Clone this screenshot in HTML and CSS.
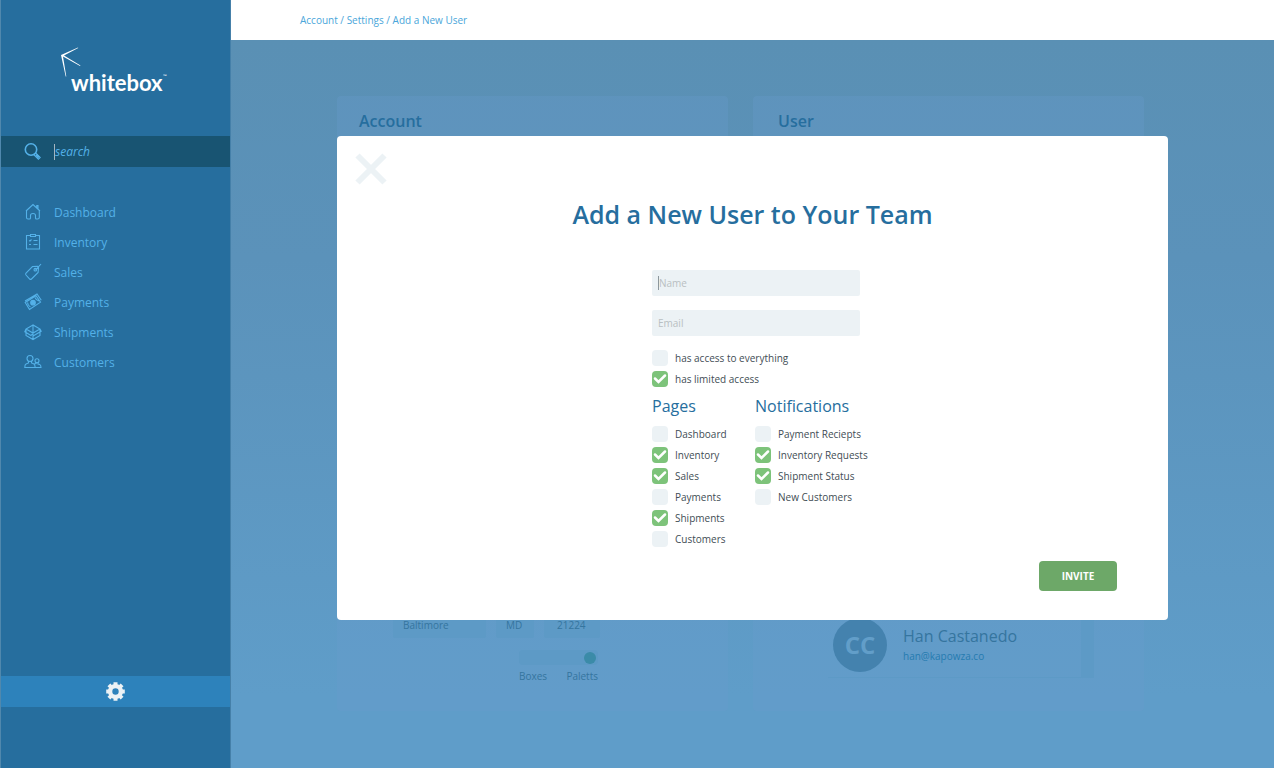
FILE: index.html
```html
<!DOCTYPE html>
<html lang="en">
<head>
<meta charset="utf-8">
<meta name="viewport" content="width=device-width, initial-scale=1">
<title>Whitebox - Add a New User</title>
<link rel="stylesheet" href="styles.css">
</head>
<body>
<div class="app">
  <aside class="sidebar">
    <a class="logo" href="#" aria-label="whitebox">
      <svg width="108" height="50" viewBox="0 0 108 50" aria-hidden="true">
        <g fill="#fff">
          <path d="M0 8 17 .5 17.200 1 3 8.500 19.500 18.500 19 19 2 9.500 5.300 29.500 4.700 29.500Z"/>
        </g>
        <text class="logo-word" x="10" y="44">whitebox</text>
        <text class="logo-mark" x="102" y="31">™</text>
      </svg>
    </a>
    <label class="search">
      <svg class="icon" viewBox="0 0 18 18" aria-hidden="true">
        <circle cx="7" cy="6.500" r="5.700" stroke-width="1.600"/>
        <path d="m11 10.700 1-.5 4.200 4.200-1.800 1.900-4.200-4.200z"/>
        <path d="m12 11.700 2.800 2.900" stroke-width="2.400"/>
      </svg>
      <span class="caret"></span>
      <input class="search-input" type="search" placeholder="search" aria-label="Search">
    </label>
    <nav class="nav">
      <a class="nav-link" href="#">
        <svg class="icon" viewBox="0 0 18 18" aria-hidden="true"><path d="M2.500 7.500v7q0 1.500 1.500 1.500h1.500q1 0 1-1v-2.500q0-2 2.500-2t2.500 2V15q0 1 1 1h1q1.800 0 1.800-1.500v-7M2 8l7-6.500L16 8M12.800 4.500V2.500h1.200v3.500"/></svg>
        Dashboard
      </a>
      <a class="nav-link" href="#">
        <svg class="icon" viewBox="0 0 18 18" aria-hidden="true"><path d="M6.500 2.500h-4v13.500h13v-13.500h-4M6.500 1.500h5v2h-5zM5 7.500l1 .6L7.500 6.500M9.500 7.500h4M5 11.500h2M9.500 11.500h4"/></svg>
        Inventory
      </a>
      <a class="nav-link" href="#">
        <svg class="icon" viewBox="0 0 18 18" aria-hidden="true"><path d="M8.500 3.500 13.500 3.200l1 1.300-.4 5-6.800 6.700q-.8.500-1.600-.2L2 12q-.8-1 0-1.900zM11.500 7.200 17 1"/><circle cx="11.300" cy="6.700" r="1.300"/></svg>
        Sales
      </a>
      <a class="nav-link" href="#">
        <svg class="icon" viewBox="0 0 18 18" aria-hidden="true"><path d="M1.200 9.500 12 2.700l4.500 6.500L5.500 16.500zM1 8l12-7 4.300 6.300M3.500 9.600q0 2.500 3 4.500M11 4.500q1 2.600 4 3.500"/><circle class="solid" cx="9" cy="9.700" r="2.300"/></svg>
        Payments
      </a>
      <a class="nav-link" href="#">
        <svg class="icon" viewBox="0 0 18 18" aria-hidden="true"><path d="M9 2 2 6v6.500l7 4 7-4V6zM9 2v14.500M2 6l7 4 7-4M2 6 .8 8.800 7 12.500 9 10M16 6l1.200 2.300L9 13"/></svg>
        Shipments
      </a>
      <a class="nav-link" href="#">
        <svg class="icon" viewBox="0 0 18 18" aria-hidden="true"><circle cx="6" cy="5.500" r="3"/><path d="M4.500 8v2l-2.500 1Q.8 11.500.8 14.500H17q0-2.500-1.300-3L14 11v-1.500M7.500 8v2l2.500 1q1 .7 1.200 3.500M10 11l2-.5v-1"/><circle cx="13" cy="7.700" r="2"/></svg>
        Customers
      </a>
    </nav>
    <button class="settings" type="button" aria-label="Settings">
      <svg width="20" height="20" viewBox="0 0 20 20" aria-hidden="true">
        <circle cx="9.500" cy="9.500" r="5.400" fill="none" stroke="#ecf2f5" stroke-width="4.400"/>
        <path d="M9.500 .2v3M9.500 15.800v3M.2 9.500h3M15.800 9.500h3M2.900 2.900l2.200 2.200M13.900 13.900l2.200 2.200M2.900 16.100l2.200-2.200M13.900 5.100l2.200-2.200" stroke="#ecf2f5" stroke-width="4"/>
      </svg>
    </button>
  </aside>

  <div class="main">
    <header class="topbar">
      <nav class="breadcrumb" aria-label="Breadcrumb"><a href="#">Account</a> / <a href="#">Settings</a> / <a href="#">Add a New User</a></nav>
    </header>
    <main class="content">
      <section class="card account">
        <h2 class="card-title">Account</h2>
        <div class="account-fields">
          <div class="address">
            <input class="ghost-input" type="text" value="Baltimore" aria-label="City">
            <input class="ghost-input state" type="text" value="MD" aria-label="State">
            <input class="ghost-input zip" type="text" value="21224" aria-label="Zip code">
          </div>
          <div class="units">
            <button class="switch" type="button" role="switch" aria-checked="true" aria-label="Boxes or Paletts"></button>
            <div class="switch-labels"><span>Boxes</span><span>Paletts</span></div>
          </div>
        </div>
      </section>
      <section class="card user">
        <h2 class="card-title">User</h2>
        <div class="person">
          <span class="avatar">CC</span>
          <div>
            <div class="person-name">Han Castanedo</div>
            <a class="person-mail" href="#">han@kapowza.co</a>
          </div>
        </div>
      </section>

      <div class="modal" role="dialog" aria-labelledby="modal-title">
        <button class="close" type="button" aria-label="Close">
          <svg width="32" height="32" viewBox="0 0 32 32" aria-hidden="true"><path d="M2.500 2.500l27 27M29.500 2.500l-27 27" stroke="#ecf2f5" stroke-width="6"/></svg>
        </button>
        <h1 class="modal-title" id="modal-title">Add a New User to Your Team</h1>
        <form class="form">
          <div class="field">
            <span class="caret"></span>
            <input class="field-input" type="text" placeholder="Name" aria-label="Name">
          </div>
          <div class="field">
            <input class="field-input" type="email" placeholder="Email" aria-label="Email">
          </div>
          <div class="checks">
            <label class="check"><input type="checkbox">has access to everything</label>
            <label class="check"><input type="checkbox" checked>has limited access</label>
          </div>
          <div class="groups">
            <fieldset class="group">
              <legend class="group-title">Pages</legend>
              <label class="check"><input type="checkbox">Dashboard</label>
              <label class="check"><input type="checkbox" checked>Inventory</label>
              <label class="check"><input type="checkbox" checked>Sales</label>
              <label class="check"><input type="checkbox">Payments</label>
              <label class="check"><input type="checkbox" checked>Shipments</label>
              <label class="check"><input type="checkbox">Customers</label>
            </fieldset>
            <fieldset class="group">
              <legend class="group-title">Notifications</legend>
              <label class="check"><input type="checkbox">Payment Reciepts</label>
              <label class="check"><input type="checkbox" checked>Inventory Requests</label>
              <label class="check"><input type="checkbox" checked>Shipment Status</label>
              <label class="check"><input type="checkbox">New Customers</label>
            </fieldset>
          </div>
        </form>
        <div class="actions"><button class="invite" type="button">INVITE</button></div>
      </div>
    </main>
  </div>
</div>
</body>
</html>
```
FILE: styles.css
```css
* { box-sizing: border-box; }

body {
  margin: 0;
  font-family: "Open Sans", sans-serif;
  font-size: 10px;
  color: #3f4d55;
}

a { color: inherit; text-decoration: none; }

button, input { font: inherit; color: inherit; border: 0; margin: 0; padding: 0; }

button { cursor: pointer; }

input { outline: 0; }

.app {
  display: grid;
  grid-template-columns: 231px 1fr;
  min-height: 100vh;
}

/* Sidebar */

.sidebar {
  display: flex;
  flex-direction: column;
  background: #266e9e;
  border-left: 1px solid #5088ad;
  border-right: 1px solid #4580a9;
  color: #54b1e8;
}

.logo { display: block; margin: 47px 0 0 60px; height: 89px; }

.logo svg { display: block; overflow: visible; }

.logo-word { font: 700 22px Lato, sans-serif; fill: #fff; }

.logo-mark { font: 5px Lato, sans-serif; fill: #fff; }

.icon {
  flex: none;
  width: 18px;
  height: 18px;
  fill: none;
  stroke: currentColor;
  stroke-width: 1.1;
}

.icon .solid { fill: currentColor; }

.search {
  display: flex;
  align-items: center;
  height: 31px;
  padding-left: 23px;
  background: #185472;
}

.caret { flex: none; width: 1px; height: 16px; background: #a3b5c0; }

.search .caret { margin-left: 12px; }

.search-input {
  width: 100%;
  background: none;
  font-size: 12px;
  font-style: italic;
}

.search-input::placeholder { color: #54b1e8; opacity: 1; }

.nav { padding-top: 30px; }

.nav-link {
  display: flex;
  align-items: center;
  gap: 12px;
  height: 30px;
  padding-left: 23px;
  font-size: 12px;
}

.settings {
  display: flex;
  align-items: center;
  justify-content: center;
  height: 31px;
  margin-top: auto;
  margin-bottom: 61px;
  background: #2d82bb;
}

/* Page behind the dialog */

.main { display: flex; flex-direction: column; min-width: 0; }

.topbar {
  display: flex;
  align-items: center;
  height: 40px;
  padding-left: 69px;
  background: #fff;
  color: #4aa6da;
}

.content {
  position: relative;
  flex: 1;
  display: grid;
  grid-template-columns: 1fr 1fr;
  gap: 25px;
  padding: 56px 130px 57px 106px;
  background: linear-gradient(#5a90b4, #5b92ba 30%, #5f9dc9 90%);
}

.card {
  display: flex;
  flex-direction: column;
  justify-content: space-between;
  border-radius: 4px;
  background: rgba(106, 157, 205, 0.3);
  color: #35759f;
}

.card-title {
  margin: 13px 0 0 22px;
  font-size: 16px;
  line-height: 24px;
  font-weight: 600;
  color: #266e9e;
}

.user .card-title { margin-left: 25px; }

.account-fields { padding: 0 0 28px 56px; }

.address { display: flex; gap: 10px; }

.ghost-input {
  width: 93px;
  height: 26px;
  padding-left: 10px;
  border-radius: 2px;
  background: #5d9ac6;
}

.ghost-input.state { width: 38px; }

.ghost-input.zip { width: 56px; padding-left: 13px; }

.units { width: 79px; margin: 12px 0 0 126px; }

.switch {
  display: flex;
  align-items: center;
  justify-content: flex-end;
  width: 100%;
  height: 15px;
  padding-right: 2px;
  border-radius: 4px;
  background: #5d9ac6;
}

.switch::after {
  content: "";
  width: 12px;
  height: 12px;
  border-radius: 50%;
  background: #3b8ba8;
}

.switch-labels { display: flex; justify-content: space-between; line-height: 14px; margin-top: 4px; }

.person {
  display: flex;
  align-items: center;
  gap: 16px;
  height: 66px;
  margin: 0 50px 33px 75px;
  padding: 0 0 0 5px;
  border-right: 13px solid #5d9ac6;
  border-bottom: 1px solid #5d9ac6;
}

.avatar {
  display: flex;
  align-items: center;
  justify-content: center;
  width: 54px;
  height: 54px;
  border-radius: 50%;
  background: #4482ae;
  color: #629ec9;
  font-size: 24px;
  font-weight: 700;
}

.person-name { font-size: 16px; line-height: 22px; }

.person-mail { color: #257bb0; line-height: 18px; }

/* Dialog */

.modal {
  position: absolute;
  top: 96px;
  left: 106px;
  right: 106px;
  padding-bottom: 29px;
  border-radius: 4px;
  background: #fff;
}

.close { display: block; width: 32px; height: 32px; margin: 17px 0 0 18px; background: none; }

.modal-title {
  margin: 11px 0 38px;
  font-size: 25px;
  line-height: 36px;
  font-weight: 600;
  text-align: center;
  color: #266e9e;
}

.form { width: 231px; margin: 0 auto; padding-left: 15px; }

.field {
  display: flex;
  align-items: center;
  width: 208px;
  height: 26px;
  margin-bottom: 14px;
  padding-left: 6px;
  border-radius: 2px;
  background: #ecf2f5;
}

.field .caret { height: 14px; background: #8d979c; }

.field-input { width: 100%; background: none; }

.field-input::placeholder { color: #b9bfc2; opacity: 1; }

.checks { margin-top: -3px; }

.check {
  display: flex;
  align-items: center;
  gap: 7px;
  height: 21px;
  white-space: nowrap;
}

.check input {
  appearance: none;
  flex: none;
  width: 16px;
  height: 16px;
  border-radius: 4px;
  background: #ecf2f5;
}

.check input:checked {
  background: #7dc37a url("data:image/svg+xml,%3Csvg xmlns='http://www.w3.org/2000/svg' viewBox='0 0 16 16'%3E%3Cpath d='M3 7.500l3.500 3.500L13 4.500' fill='none' stroke='%23fff' stroke-width='2.500' stroke-linecap='round'/%3E%3C/svg%3E");
}

.groups { display: grid; grid-template-columns: 103px 1fr; margin-top: 6px; }

.group { min-width: 0; margin: 0; padding: 0; border: 0; }

.group-title {
  padding: 0 0 6px;
  font-size: 16px;
  line-height: 22px;
  color: #266e9e;
}

.actions { display: flex; justify-content: flex-end; margin-top: 12px; padding-right: 51px; }

.invite {
  width: 78px;
  height: 30px;
  border-radius: 4px;
  background: #6da868;
  color: #fff;
  font-weight: 700;
}
```
